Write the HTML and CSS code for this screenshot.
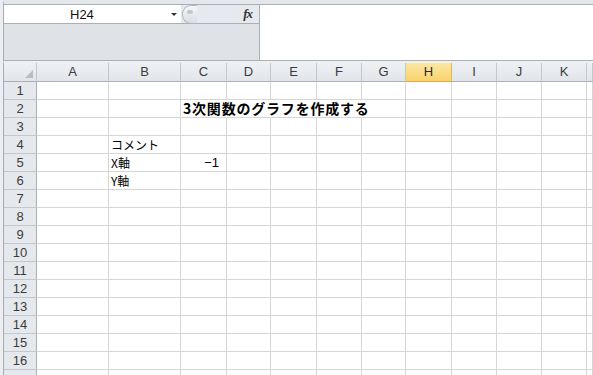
FILE: index.html
```html
<!DOCTYPE html>
<html lang="ja">
<head>
    <meta charset="UTF-8">
    <title>3次関数のグラフ</title>
    <link rel="stylesheet" href="styles.css">
</head>
<body>
<div class="window">

    <!-- Formula bar -->
    <div class="fbar">
        <div class="fbar-left">
            <div class="name-row">
                <div class="namebox">
                    <span class="name">H24</span>
                    <span class="drop"></span>
                </div>
                <div class="grip"><span></span></div>
                <div class="fx">fx</div>
            </div>
            <div class="fbar-space"></div>
        </div>
        <div class="fbar-input"></div>
    </div>

    <!-- Sheet -->
    <div class="sheet">
        <div class="row head">
            <div class="corner"></div><div>A</div><div>B</div><div>C</div><div>D</div><div>E</div><div>F</div><div>G</div><div class="sel">H</div><div>I</div><div>J</div><div>K</div><div></div>
        </div>
        <div class="row"><div class="num">1</div><div></div><div></div><div></div><div></div><div></div><div></div><div></div><div></div><div></div><div></div><div></div><div></div></div>
        <div class="row"><div class="num">2</div><div></div><div></div><div class="span title">3次関数のグラフを作成する</div><div class="span"></div><div class="span"></div><div class="span"></div><div></div><div></div><div></div><div></div><div></div><div></div></div>
        <div class="row"><div class="num">3</div><div></div><div></div><div></div><div></div><div></div><div></div><div></div><div></div><div></div><div></div><div></div><div></div></div>
        <div class="row"><div class="num">4</div><div></div><div class="txt">コメント</div><div></div><div></div><div></div><div></div><div></div><div></div><div></div><div></div><div></div><div></div></div>
        <div class="row"><div class="num">5</div><div></div><div class="txt">X軸</div><div class="val">−1</div><div></div><div></div><div></div><div></div><div></div><div></div><div></div><div></div><div></div></div>
        <div class="row"><div class="num">6</div><div></div><div class="txt">Y軸</div><div></div><div></div><div></div><div></div><div></div><div></div><div></div><div></div><div></div><div></div></div>
        <div class="row"><div class="num">7</div><div></div><div></div><div></div><div></div><div></div><div></div><div></div><div></div><div></div><div></div><div></div><div></div></div>
        <div class="row"><div class="num">8</div><div></div><div></div><div></div><div></div><div></div><div></div><div></div><div></div><div></div><div></div><div></div><div></div></div>
        <div class="row"><div class="num">9</div><div></div><div></div><div></div><div></div><div></div><div></div><div></div><div></div><div></div><div></div><div></div><div></div></div>
        <div class="row"><div class="num">10</div><div></div><div></div><div></div><div></div><div></div><div></div><div></div><div></div><div></div><div></div><div></div><div></div></div>
        <div class="row"><div class="num">11</div><div></div><div></div><div></div><div></div><div></div><div></div><div></div><div></div><div></div><div></div><div></div><div></div></div>
        <div class="row"><div class="num">12</div><div></div><div></div><div></div><div></div><div></div><div></div><div></div><div></div><div></div><div></div><div></div><div></div></div>
        <div class="row"><div class="num">13</div><div></div><div></div><div></div><div></div><div></div><div></div><div></div><div></div><div></div><div></div><div></div><div></div></div>
        <div class="row"><div class="num">14</div><div></div><div></div><div></div><div></div><div></div><div></div><div></div><div></div><div></div><div></div><div></div><div></div></div>
        <div class="row"><div class="num">15</div><div></div><div></div><div></div><div></div><div></div><div></div><div></div><div></div><div></div><div></div><div></div><div></div></div>
        <div class="row"><div class="num">16</div><div></div><div></div><div></div><div></div><div></div><div></div><div></div><div></div><div></div><div></div><div></div><div></div></div>
        <!-- row 17, only its top edge shows -->
        <div class="row"><div class="num"></div><div></div><div></div><div></div><div></div><div></div><div></div><div></div><div></div><div></div><div></div><div></div><div></div></div>
    </div>

</div>
</body>
</html>
```

FILE: styles.css
```css
body {
    margin: 0;
    padding: 0;
    background-color: #ffffff;
    font-family: 'Liberation Sans', Arial, sans-serif;
    overflow: hidden;
}

.window {
    width: 593px;
    height: 375px;
    overflow: hidden;
    border-left: 3px solid #eceef1;
    box-sizing: border-box;
}

.window > * {
    border-left: 1px solid #a7adb5;
}

/* Formula bar */
.fbar {
    display: flex;
    height: 63px;
    box-sizing: border-box;
    border-top: 4px solid #e4e7eb;
    border-bottom: 2px solid #eef0f2;
    background-color: #ffffff;
}

.fbar-left {
    width: 255px;
    display: flex;
    flex-direction: column;
    border-top: 1px solid #a9b0b8;
    border-bottom: 1px solid #a9b0b8;
    border-right: 1px solid #a9b0b8;
    background-color: #dfe3e8;
}

.name-row {
    display: flex;
    height: 19px;
    border-bottom: 1px solid #a9b0b8;
    box-sizing: border-box;
    background-color: #e6e9ed;
}

.namebox {
    width: 177px;
    background-color: #ffffff;
    position: relative;
}

.name {
    position: absolute;
    left: 66px;
    top: 2px;
    font-size: 13px;
    color: #111;
}

.drop {
    position: absolute;
    left: 167px;
    top: 8px;
    width: 0;
    height: 0;
    border-left: 3px solid transparent;
    border-right: 3px solid transparent;
    border-top: 3px solid #333;
}

.grip {
    width: 14px;
    height: 17px;
    margin-left: 1px;
    border: 1px solid #b3b8bf;
    border-right: none;
    border-radius: 9px 0 0 9px;
    background: linear-gradient(#f6f7f9, #d9dde2);
    position: relative;
}

.grip span {
    position: absolute;
    left: 4px;
    top: 4px;
    width: 6px;
    height: 4px;
    border-radius: 3px;
    background-color: #c3c7cc;
}

.fx {
    margin-left: auto;
    margin-right: 7px;
    font-family: 'Liberation Serif', serif;
    font-style: italic;
    font-weight: bold;
    font-size: 13px;
    line-height: 17px;
    color: #333;
    letter-spacing: -1px;
}

.fbar-space {
    flex: 1;
}

.fbar-input {
    flex: 1;
    border-top: 1px solid #a9b0b8;
    border-bottom: 1px solid #a9b0b8;
    border-left: none !important;
    background-color: #ffffff;
}

/* Sheet grid */
.sheet {
    font-size: 13px;
}

.row {
    display: grid;
    grid-template-columns: 33px 72px 72px 46px 44px 46px 45px 44px 46px 45px 45px 45px 1fr;
    height: 18px;
}

.row > div {
    border-right: 1px solid #d6d6d6;
    border-bottom: 1px solid #d6d6d6;
    box-sizing: border-box;
    white-space: nowrap;
    line-height: 17px;
}

.row.head {
    height: 19px;
}

.row.head > div {
    background: linear-gradient(#eef0f3, #e1e5ea);
    border-right: 1px solid #c3c8ce;
    border-bottom: 1px solid #a9b0b8;
    text-align: center;
    color: #3c3c3c;
    line-height: 18px;
}

.row.head > div.sel {
    background: linear-gradient(#fbe7a4, #f7d36b);
    border-right-color: #e9b64d;
    border-bottom-color: #e9a83a;
    color: #2a2a2a;
}

.corner {
    position: relative;
}

.corner::after {
    content: "";
    position: absolute;
    right: 3px;
    bottom: 3px;
    border-left: 8px solid transparent;
    border-bottom: 8px solid #b9bdc2;
}

.row > div.num {
    background-color: #e5e8ec;
    border-right: 1px solid #a9b0b8;
    border-bottom: 1px solid #c3c8ce;
    text-align: center;
    color: #3c3c3c;
}

.row > div.span {
    border-right-color: transparent;
}

.title {
    font-family: 'Noto Sans CJK JP', sans-serif;
    font-weight: bold;
    font-size: 14px;
    letter-spacing: 0.8px;
    padding-left: 2px;
    color: #000;
}

.txt {
    font-family: 'Noto Sans CJK JP', sans-serif;
    font-size: 12px;
    padding-left: 2px;
    color: #000;
}

.val {
    text-align: right;
    padding-right: 7px;
    color: #000;
}
```
